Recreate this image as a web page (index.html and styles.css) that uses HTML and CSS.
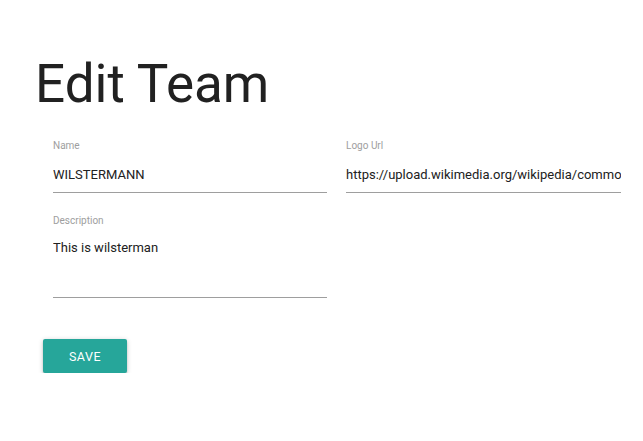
FILE: index.html
```html
<!DOCTYPE html>
<html>
<head>
<meta charset="utf-8">
<link rel="stylesheet" href="styles.css">
</head>
<body>
<div class="page">
  <h1 class="title">Edit Team</h1>
  <form class="form">
    <div class="fields">
      <div class="field">
        <label class="label">Name</label>
        <input class="input" type="text" value="WILSTERMANN">
      </div>
      <div class="field">
        <label class="label">Logo Url</label>
        <input class="input" type="text" value="https://upload.wikimedia.org/wikipedia/commons/thumb/wilstermann.png">
      </div>
      <div class="field field-desc">
        <label class="label">Description</label>
        <textarea class="textarea">This is wilsterman</textarea>
      </div>
    </div>
    <button class="btn" type="button">Save</button>
  </form>
</div>
</body>
</html>
```
FILE: styles.css
```css
html, body {
  margin: 0;
  padding: 0;
  background: #ffffff;
}
body {
  font-family: Roboto, "Liberation Sans", sans-serif;
  color: #212121;
}
.page {
  padding-left: 35px;
}
.title {
  margin: 54px 0 0 0;
  font-size: 53px;
  font-weight: 400;
  line-height: 60px;
  color: #212121;
}
.form {
  margin: 26px 0 0 0;
}
.fields {
  display: grid;
  grid-template-columns: 274px 275px;
  column-gap: 19px;
  margin-left: 18px;
}
.field {
  display: flex;
  flex-direction: column;
}
.field-desc {
  margin-top: 22px;
}
.label {
  font-size: 10px;
  line-height: 12px;
  color: #9e9e9e;
}
.input {
  margin: 15px 0 0 0;
  padding: 0 0 9px 0;
  border: none;
  border-bottom: 1px solid #9e9e9e;
  outline: none;
  font-family: Roboto, "Liberation Sans", sans-serif;
  font-size: 13px;
  line-height: 16px;
  height: 16px;
  color: #212121;
  background: transparent;
  width: 100%;
  box-sizing: content-box;
}
.textarea {
  margin: 13px 0 0 0;
  padding: 0;
  border: none;
  border-bottom: 1px solid #9e9e9e;
  outline: none;
  resize: none;
  font-family: Roboto, "Liberation Sans", sans-serif;
  font-size: 13px;
  line-height: 16px;
  height: 58px;
  color: #212121;
  background: transparent;
  width: 100%;
  box-sizing: border-box;
  overflow: hidden;
  display: block;
}
.btn {
  margin: 41px 0 0 8px;
  width: 84px;
  height: 34px;
  border: none;
  border-radius: 2px;
  background: #26a69a;
  color: #ffffff;
  font-family: Roboto, "Liberation Sans", sans-serif;
  font-size: 12.5px;
  letter-spacing: 0.5px;
  text-transform: uppercase;
  box-shadow: 0 2px 2px 0 rgba(0,0,0,0.14), 0 3px 1px -2px rgba(0,0,0,0.12), 0 1px 5px 0 rgba(0,0,0,0.2);
  padding: 0;
  display: block;
}
```
